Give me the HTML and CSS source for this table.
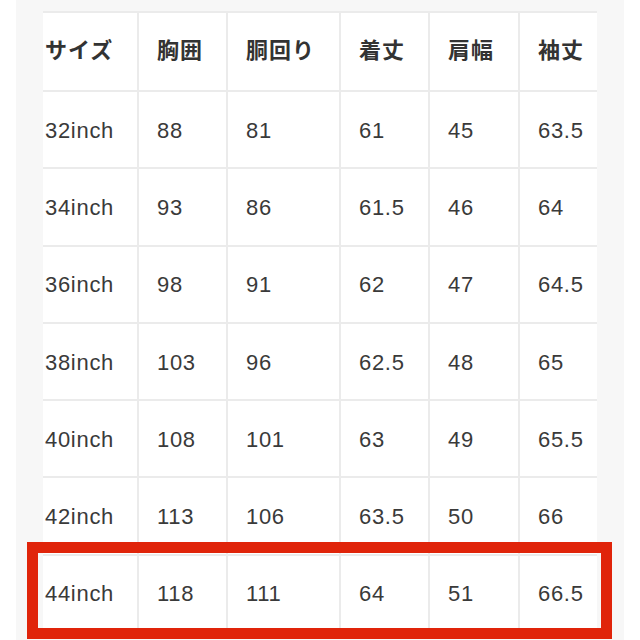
FILE: index.html
```html
<!DOCTYPE html>
<html lang="ja">
<head>
<meta charset="utf-8">
<title>サイズ表</title>
<link rel="stylesheet" href="styles.css">
</head>
<body>
<div class="page">
  <div class="sheet">
    <div class="grid">
      <div class="cell head first">サイズ</div>
      <div class="cell head">胸囲</div>
      <div class="cell head">胴回り</div>
      <div class="cell head">着丈</div>
      <div class="cell head">肩幅</div>
      <div class="cell head">袖丈</div>

      <div class="cell first">32inch</div><div class="cell">88</div><div class="cell">81</div><div class="cell">61</div><div class="cell">45</div><div class="cell">63.5</div>
      <div class="cell first">34inch</div><div class="cell">93</div><div class="cell">86</div><div class="cell">61.5</div><div class="cell">46</div><div class="cell">64</div>
      <div class="cell first">36inch</div><div class="cell">98</div><div class="cell">91</div><div class="cell">62</div><div class="cell">47</div><div class="cell">64.5</div>
      <div class="cell first">38inch</div><div class="cell">103</div><div class="cell">96</div><div class="cell">62.5</div><div class="cell">48</div><div class="cell">65</div>
      <div class="cell first">40inch</div><div class="cell">108</div><div class="cell">101</div><div class="cell">63</div><div class="cell">49</div><div class="cell">65.5</div>
      <div class="cell first">42inch</div><div class="cell">113</div><div class="cell">106</div><div class="cell">63.5</div><div class="cell">50</div><div class="cell">66</div>
      <div class="cell first">44inch</div><div class="cell">118</div><div class="cell">111</div><div class="cell">64</div><div class="cell">51</div><div class="cell">66.5</div>
    </div>
    <div class="highlight"></div>
  </div>
</div>
</body>
</html>
```

FILE: styles.css
```css
html, body {
  margin: 0;
  padding: 0;
  background: #ffffff;
}

body {
  width: 640px;
  height: 640px;
  overflow: hidden;
}

.page {
  margin: 0 16px;
  height: 640px;
  background: #f7f7f7;
  padding: 11px 27px 0 27px;
  box-sizing: border-box;
}

.sheet {
  position: relative;
}

.grid {
  display: grid;
  grid-template-columns: 94px 89px 113px 89px 90px 79px;
  grid-auto-rows: 77.3px;
  grid-template-rows: 79px;
  background: #ffffff;
  border-top: 2px solid #ebebeb;
}

.cell {
  box-sizing: border-box;
  display: flex;
  align-items: center;
  padding: 2px 0 0 18px;
  border-left: 2px solid #ebebeb;
  border-bottom: 2px solid #ebebeb;
  font-family: "Liberation Sans", Arial, sans-serif;
  font-size: 22px;
  letter-spacing: 0.7px;
  color: #3a3a3a;
  white-space: nowrap;
}

.cell.first {
  border-left: none;
  padding-left: 2px;
}

.cell.head {
  font-family: "Noto Sans CJK JP", "Noto Sans", sans-serif;
  font-weight: 700;
  font-size: 22px;
  letter-spacing: 1px;
  color: #333333;
  padding-top: 0;
  padding-bottom: 8px;
  border-bottom-width: 2px;
}

.highlight {
  position: absolute;
  left: -16px;
  right: -15px;
  top: 531px;
  height: 97px;
  border: 11px solid #e0240a;
  box-sizing: border-box;
}
```
